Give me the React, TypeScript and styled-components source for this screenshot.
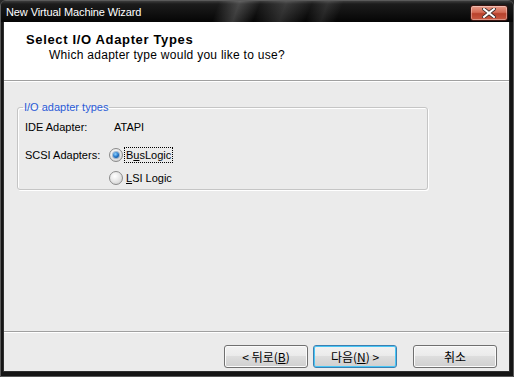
import styled, { createGlobalStyle } from "styled-components";

const GlobalStyle = createGlobalStyle`
  html, body {
    margin: 0;
    padding: 0;
    background: #2a2a2a;
  }
  body {
    font-family: "Liberation Sans", "Noto Sans CJK KR", sans-serif;
  }
`;

const Window = styled.div`
  width: 514px;
  height: 377px;
  box-sizing: border-box;
  display: flex;
  flex-direction: column;
  background: #151515;
  border: 1px solid #5a5a5a;
  border-radius: 6px 6px 0 0;
  overflow: hidden;
`;

const TitleBar = styled.div`
  height: 21px;
  flex: none;
  display: flex;
  align-items: center;
  justify-content: space-between;
  padding: 0 5px 0 5px;
  background:
    linear-gradient(110deg, transparent 42%, rgba(255,255,255,0.2) 46%, transparent 50%,
      rgba(255,255,255,0.14) 55%, transparent 60%, rgba(255,255,255,0.1) 63%, transparent 66%),
    linear-gradient(to bottom, #3c3c3c 0, #1c1c1c 3px, #050505 100%);
`;

const Title = styled.span`
  color: #fff;
  font-size: 11px;
  letter-spacing: -0.1px;
  padding-top: 1px;
`;

const CloseButton = styled.div`
  width: 38px;
  height: 16px;
  margin-top: 2px;
  box-sizing: border-box;
  border: 1px solid #3a1410;
  border-radius: 3px;
  background: linear-gradient(to bottom, #e79a88 0, #d46b55 45%, #b8412c 55%, #c95a43 100%);
  box-shadow: inset 0 0 0 1px rgba(255,255,255,0.35);
  display: flex;
  align-items: center;
  justify-content: center;
`;

const Frame = styled.div`
  flex: 1;
  display: flex;
  flex-direction: column;
  margin: 0 3px 4px 2px;
  background: #ebebeb;
  border: 1px solid #2e2e2e;
  border-top: none;
`;

const Header = styled.div`
  height: 59px;
  flex: none;
  background: #fff;
  border-bottom: 1px solid #a0a0a0;
  box-shadow: 0 1px 0 #fff;
  padding: 10px 0 0 22px;
  box-sizing: border-box;
`;

const HeaderTitle = styled.div`
  font-weight: bold;
  font-size: 13px;
  letter-spacing: 0.65px;
  color: #000;
  line-height: 15px;
`;

const HeaderSub = styled.div`
  font-size: 12px;
  letter-spacing: 0.27px;
  color: #000;
  line-height: 15px;
  padding-left: 23px;
  margin-top: 1px;
`;

const Body = styled.div`
  flex: 1;
  padding: 19px 0 0 13px;
`;

const Group = styled.fieldset`
  width: 411px;
  height: 90px;
  box-sizing: border-box;
  margin: 0;
  padding: 0 0 0 7px;
  border: 1px solid #c5c5c5;
  border-radius: 3px;
  box-shadow: inset 1px 1px 0 #fff, 1px 1px 0 #fff;
`;

const Legend = styled.legend`
  color: #2a5bd7;
  font-size: 11px;
  line-height: 14px;
  padding: 0 1px;
  margin-left: -2px;
`;

const Row = styled.div<{ $top: number }>`
  display: flex;
  align-items: center;
  height: 20px;
  margin-top: ${(p) => p.$top}px;
  font-size: 11px;
  color: #000;
`;

const Label = styled.span`
  width: 89px;
`;

const Radio = styled.span<{ $checked?: boolean }>`
  width: 12px;
  height: 12px;
  border-radius: 50%;
  border: 1px solid #8a8a8a;
  background: radial-gradient(circle at 40% 35%, #ffffff 0, #e4e4e4 55%, #c4c4c4 100%);
  display: inline-flex;
  align-items: center;
  justify-content: center;
  margin-right: 2px;
  margin-left: -5px;
  &::after {
    content: "";
    display: ${(p) => (p.$checked ? "block" : "none")};
    width: 6px;
    height: 6px;
    border-radius: 50%;
    background: radial-gradient(circle at 40% 35%, #8fd3ff 0, #1d6fc4 55%, #0a3f7a 100%);
    box-shadow: 0 0 0 1px rgba(30, 80, 140, 0.35);
  }
`;

const Option = styled.span<{ $focus?: boolean }>`
  padding: 0 1px;
  outline: ${(p) => (p.$focus ? "1px dotted #000" : "none")};
  line-height: 14px;
`;

const Footer = styled.div`
  height: 40px;
  flex: none;
  border-top: 1px solid #a0a0a0;
  box-shadow: inset 0 1px 0 #fff;
  display: flex;
  align-items: flex-start;
  padding: 13px 0 0 220px;
  box-sizing: border-box;
`;

const Button = styled.button<{ $primary?: boolean; $gap?: number }>`
  width: 84px;
  height: 23px;
  margin-left: ${(p) => p.$gap ?? 0}px;
  border: 1px solid ${(p) => (p.$primary ? "#3c7fb1" : "#707070")};
  border-radius: 3px;
  background: linear-gradient(to bottom, #f2f2f2 0, #ebebeb 45%, #dddddd 50%, #cfcfcf 100%);
  box-shadow: inset 0 0 0 1px ${(p) => (p.$primary ? "#48c6f5" : "#fbfbfb")};
  font-family: "Noto Sans CJK KR", "Liberation Sans", sans-serif;
  font-size: 12px;
  color: #000;
  padding: 0;
  line-height: 20px;
`;

const U = styled.span`
  text-decoration: underline;
`;

export default function App() {
  return (
    <>
      <GlobalStyle />
      <Window>
        <TitleBar>
          <Title>New Virtual Machine Wizard</Title>
          <CloseButton>
            <svg width="14" height="10" viewBox="0 0 14 10">
              <path
                d="M2 1 L12 9 M12 1 L2 9"
                stroke="#3a2a28"
                strokeWidth="3.6"
                strokeLinecap="square"
              />
              <path
                d="M2 1 L12 9 M12 1 L2 9"
                stroke="#fff"
                strokeWidth="2"
                strokeLinecap="square"
              />
            </svg>
          </CloseButton>
        </TitleBar>
        <Frame>
          <Header>
            <HeaderTitle>Select I/O Adapter Types</HeaderTitle>
            <HeaderSub>Which adapter type would you like to use?</HeaderSub>
          </Header>
          <Body>
            <Group>
              <Legend>I/O adapter types</Legend>
              <Row $top={3}>
                <Label>IDE Adapter:</Label>
                <span>ATAPI</span>
              </Row>
              <Row $top={8}>
                <Label>SCSI Adapters:</Label>
                <Radio $checked />
                <Option $focus>
                  B<U>u</U>sLogic
                </Option>
              </Row>
              <Row $top={3}>
                <Label />
                <Radio />
                <Option>
                  <U>L</U>SI Logic
                </Option>
              </Row>
            </Group>
          </Body>
          <Footer>
            <Button>
              &lt; 뒤로(<U>B</U>)
            </Button>
            <Button $primary $gap={5}>
              다음(<U>N</U>) &gt;
            </Button>
            <Button $gap={16}>취소</Button>
          </Footer>
        </Frame>
      </Window>
    </>
  );
}
